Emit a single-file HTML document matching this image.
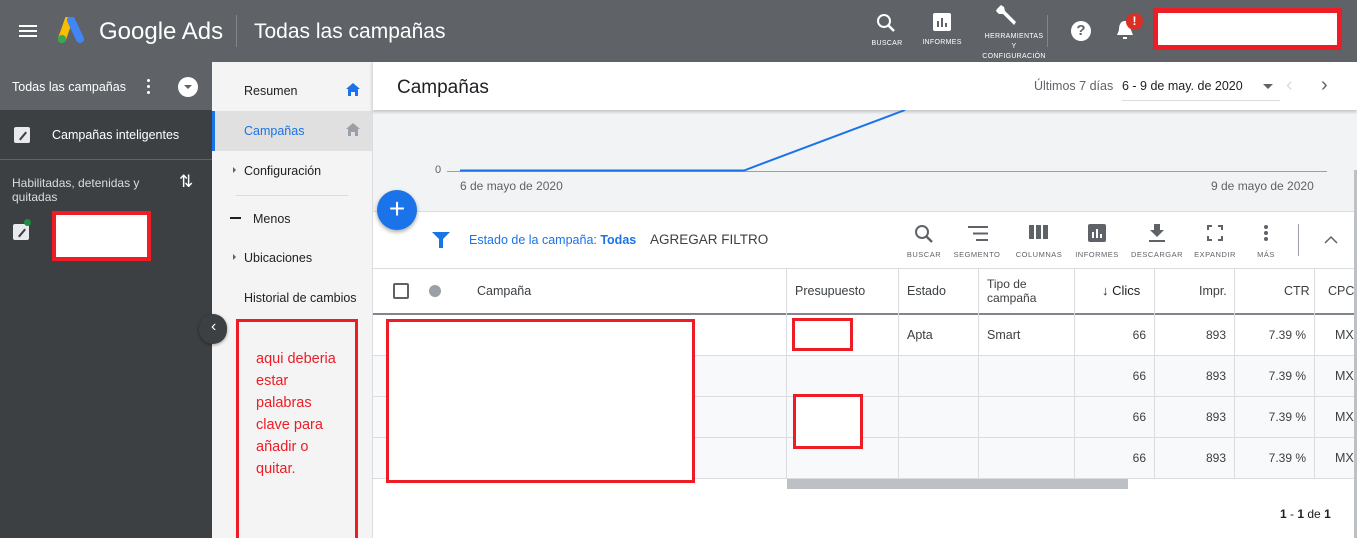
<!DOCTYPE html>
<html><head><meta charset="utf-8"><style>
*{box-sizing:border-box;margin:0;padding:0}
html,body{width:1357px;height:538px;overflow:hidden}
body{position:relative;font-family:"Liberation Sans",Arial,sans-serif;background:#fff;color:#3c4043}
.a{position:absolute}
.t{position:absolute;white-space:nowrap}
.red{position:absolute;border:3px solid #ee1c25;background:#fff}
.ic{position:absolute;font-size:7px;color:#fff;text-align:center;letter-spacing:.3px}
.tb{position:absolute;font-size:7.5px;color:#5f6368;text-align:center;letter-spacing:.5px;top:250px}
.vl{position:absolute;width:1px;background:#dadce0}
.hl{position:absolute;height:1px;background:#dadce0;left:372px;width:982px}
.num{position:absolute;font-size:12px;color:#3c4043;text-align:right}
</style></head><body>
<!-- header -->
<div class="a" style="left:0;top:0;width:1357px;height:62px;background:#5f6368"></div>
<div class="a" style="left:19px;top:25px;width:18px;height:2px;background:#fff;box-shadow:0 5px 0 #fff,0 10px 0 #fff"></div>
<svg class="a" style="left:55px;top:17px" width="32" height="28" viewBox="0 0 32 28"><path d="M14 2 L7 22" stroke="#fbbc04" stroke-width="8" stroke-linecap="round"/><path d="M16 3 L25 22" stroke="#4285f4" stroke-width="8" stroke-linecap="round"/><circle cx="7" cy="22" r="4" fill="#34a853"/></svg>
<div class="t" style="left:99px;top:18px;font-size:24px;color:#fff">Google Ads</div>
<div class="a" style="left:236px;top:15px;width:1px;height:32px;background:#80868b"></div>
<div class="t" style="left:254px;top:20px;font-size:21px;color:#fff">Todas las campañas</div>
<svg class="a" style="left:876px;top:13px" width="20" height="20" viewBox="0 0 20 20"><circle cx="8" cy="8" r="6" stroke="#fff" stroke-width="2" fill="none"/><path d="M12.5 12.5 L18 18" stroke="#fff" stroke-width="2.5"/></svg>
<div class="ic" style="left:866px;top:40px;width:42px">BUSCAR</div>
<svg class="a" style="left:933px;top:13px" width="18" height="18"><rect width="18" height="18" rx="2" fill="#fff"/><rect x="4" y="8" width="2" height="6" fill="#5f6368"/><rect x="8" y="5" width="2" height="9" fill="#5f6368"/><rect x="12" y="10" width="2" height="4" fill="#5f6368"/></svg>
<div class="ic" style="left:918px;top:39px;width:48px">INFORMES</div>
<svg class="a" style="left:995px;top:5px" width="24" height="22" viewBox="0 0 24 22"><path d="M2 4 L6 0 L9 2 L10 6 L21 17 L19 20 L8 9 L4 9 L1 6 Z" fill="#fff"/></svg>
<div class="ic" style="left:978px;top:32px;width:72px;line-height:10px">HERRAMIENTAS<br>Y<br>CONFIGURACIÓN</div>
<div class="a" style="left:1047px;top:15px;width:1px;height:32px;background:#80868b"></div>
<div class="a" style="left:1071px;top:21px;width:20px;height:20px;border-radius:50%;background:#fff;color:#5f6368;font-weight:bold;font-size:15px;text-align:center;line-height:20px">?</div>
<svg class="a" style="left:1115px;top:19px" width="20" height="22"><path d="M10 2 C5 2 4 7 4 11 L2 16 L18 16 L16 11 C16 7 15 2 10 2Z M8 18 h4 v2 h-4z" fill="#fff"/></svg>
<div class="a" style="left:1126px;top:13px;width:17px;height:17px;border-radius:50%;background:#d93025;color:#fff;font-size:12px;font-weight:bold;text-align:center;line-height:17px">!</div>
<div class="red" style="left:1153px;top:8px;width:189px;height:42px;border-width:5px"></div>

<!-- left sidebar -->
<div class="a" style="left:0;top:62px;width:212px;height:476px;background:#3c4043"></div>
<div class="a" style="left:0;top:62px;width:212px;height:48px;background:#5f6368"></div>
<div class="t" style="left:12px;top:80px;font-size:12.5px;color:#fff">Todas las campañas</div>
<div class="a" style="left:147px;top:79px;width:3px;height:3px;background:#fff;border-radius:50%;box-shadow:0 6px 0 #fff,0 12px 0 #fff"></div>
<div class="a" style="left:178px;top:77px;width:20px;height:20px;border-radius:50%;background:#fff"></div>
<div class="a" style="left:184px;top:85px;border-left:4px solid transparent;border-right:4px solid transparent;border-top:4px solid #5f6368"></div>
<div class="a" style="left:14px;top:127px;width:16px;height:16px;background:#e8eaed;border-radius:2px"></div>
<div class="a" style="left:18px;top:135px;width:10px;height:2px;background:#3c4043;transform:rotate(-50deg)"></div>
<div class="t" style="left:52px;top:128px;font-size:12.5px;color:#fff">Campañas inteligentes</div>
<div class="a" style="left:0;top:159px;width:212px;height:1px;background:#5f6368"></div>
<div class="t" style="left:12px;top:176px;font-size:12px;color:#dadce0;line-height:14px;white-space:normal;width:150px">Habilitadas, detenidas y quitadas</div>
<div class="t" style="left:179px;top:172px;font-size:17px;color:#fff">⇅</div>
<div class="a" style="left:13px;top:224px;width:16px;height:16px;background:#e8eaed;border-radius:2px"></div>
<div class="a" style="left:17px;top:232px;width:10px;height:2px;background:#3c4043;transform:rotate(-50deg)"></div>
<div class="a" style="left:24px;top:219px;width:7px;height:7px;border-radius:50%;background:#1e8e3e"></div>
<div class="red" style="left:52px;top:211px;width:99px;height:50px;border-width:4px"></div>

<!-- middle nav -->
<div class="a" style="left:212px;top:62px;width:160px;height:476px;background:#f4f4f4"></div>
<div class="t" style="left:244px;top:84px;font-size:12.5px;color:#202124">Resumen</div>
<svg class="a" style="left:346px;top:83px" width="14" height="13"><path d="M7 0 L14 6 L12 6 L12 13 L9 13 L9 9 L5 9 L5 13 L2 13 L2 6 L0 6Z" fill="#1a73e8"/></svg>
<div class="a" style="left:212px;top:111px;width:160px;height:40px;background:#e0e0e0;border-left:3px solid #1a73e8"></div>
<div class="t" style="left:244px;top:124px;font-size:12.5px;color:#1a73e8">Campañas</div>
<svg class="a" style="left:346px;top:123px" width="14" height="13"><path d="M7 0 L14 6 L12 6 L12 13 L9 13 L9 9 L5 9 L5 13 L2 13 L2 6 L0 6Z" fill="#9aa0a6"/></svg>
<div class="a" style="left:233px;top:167px;border-top:3px solid transparent;border-bottom:3px solid transparent;border-left:3px solid #5f6368"></div>
<div class="t" style="left:244px;top:164px;font-size:12.5px;color:#202124">Configuración</div>
<div class="a" style="left:236px;top:195px;width:112px;height:1px;background:#dadce0"></div>
<div class="a" style="left:230px;top:217px;width:11px;height:2px;background:#202124"></div>
<div class="t" style="left:253px;top:212px;font-size:12.5px;color:#202124">Menos</div>
<div class="a" style="left:233px;top:254px;border-top:3px solid transparent;border-bottom:3px solid transparent;border-left:3px solid #5f6368"></div>
<div class="t" style="left:244px;top:251px;font-size:12.5px;color:#202124">Ubicaciones</div>
<div class="t" style="left:244px;top:291px;font-size:12.5px;color:#202124">Historial de cambios</div>
<div class="red" style="left:236px;top:319px;width:122px;height:225px;background:#f4f4f4"></div>
<div class="t" style="left:256px;top:348px;font-size:14.5px;color:#ee1c25;line-height:22px">aqui deberia<br>estar<br>palabras<br>clave para<br>añadir o<br>quitar.</div>
<div class="a" style="left:199px;top:314px;width:28px;height:30px;border-radius:15px;background:#3c4043;box-shadow:0 1px 3px rgba(0,0,0,.4)"></div>
<div class="t" style="left:211px;top:318px;font-size:16px;color:#fff">‹</div>

<!-- main -->
<div class="a" style="left:372px;top:110px;width:985px;height:102px;background:#f1f3f4"></div>
<div class="a" style="left:372px;top:62px;width:985px;height:48px;background:#fff;box-shadow:0 2px 3px rgba(0,0,0,.2)"></div>
<div class="t" style="left:397px;top:77px;font-size:19px;color:#202124">Campañas</div>
<div class="t" style="left:1034px;top:79px;font-size:12.5px;color:#5f6368">Últimos 7 días</div>
<div class="t" style="left:1122px;top:79px;font-size:12.5px;color:#202124">6 - 9 de may. de 2020</div>
<div class="a" style="left:1122px;top:100px;width:158px;height:1px;background:#dadce0"></div>
<div class="a" style="left:1263px;top:84px;border-left:5px solid transparent;border-right:5px solid transparent;border-top:5px solid #5f6368"></div>
<div class="t" style="left:1286px;top:74px;font-size:20px;color:#dadce0">‹</div>
<div class="t" style="left:1321px;top:74px;font-size:20px;color:#5f6368">›</div>
<div class="t" style="left:435px;top:164px;font-size:11px;color:#5f6368">0</div>
<div class="a" style="left:447px;top:171px;width:880px;height:1px;background:#9aa0a6"></div>
<svg class="a" style="left:372px;top:110px" width="985" height="102"><path d="M88 60.5 L372 60.5 L533 0" stroke="#1a73e8" stroke-width="2" fill="none"/></svg>
<div class="t" style="left:460px;top:179px;font-size:12px;color:#5f6368">6 de mayo de 2020</div>
<div class="t" style="left:1211px;top:179px;font-size:12px;color:#5f6368">9 de mayo de 2020</div>
<div class="a" style="left:372px;top:211px;width:982px;height:1px;background:#dadce0"></div>
<div class="a" style="left:377px;top:190px;width:40px;height:40px;border-radius:50%;background:#1a73e8;box-shadow:0 2px 4px rgba(0,0,0,.35);color:#fff;font-size:28px;text-align:center;line-height:38px">+</div>
<svg class="a" style="left:432px;top:232px" width="18" height="16"><path d="M0 0 H18 L11 7 V16 H7 V7Z" fill="#1a73e8"/></svg>
<div class="t" style="left:469px;top:233px;font-size:12.5px;color:#1a73e8">Estado de la campaña: <b>Todas</b></div>
<div class="t" style="left:650px;top:232px;font-size:13.5px;color:#3c4043">AGREGAR FILTRO</div>
<svg class="a" style="left:914px;top:224px" width="20" height="20"><circle cx="8" cy="8" r="6" stroke="#5f6368" stroke-width="2" fill="none"/><path d="M12.5 12.5 L18 18" stroke="#5f6368" stroke-width="2.5"/></svg>
<div class="tb" style="left:904px;width:40px">BUSCAR</div>
<svg class="a" style="left:968px;top:226px" width="20" height="16"><path d="M0 1h20M5 7.5h15M8 14h12" stroke="#5f6368" stroke-width="2"/></svg>
<div class="tb" style="left:951px;width:52px">SEGMENTO</div>
<svg class="a" style="left:1029px;top:225px" width="19" height="14"><rect x="0" width="5" height="14" fill="#5f6368"/><rect x="7" width="5" height="14" fill="#5f6368"/><rect x="14" width="5" height="14" fill="#5f6368"/></svg>
<div class="tb" style="left:1012px;width:54px">COLUMNAS</div>
<svg class="a" style="left:1088px;top:224px" width="18" height="18"><rect width="18" height="18" rx="2" fill="#5f6368"/><rect x="4" y="8" width="2" height="6" fill="#fff"/><rect x="8" y="5" width="2" height="9" fill="#fff"/><rect x="12" y="10" width="2" height="4" fill="#fff"/></svg>
<div class="tb" style="left:1072px;width:50px">INFORMES</div>
<svg class="a" style="left:1148px;top:224px" width="18" height="18"><path d="M6 0h6v6h4l-7 7-7-7h4z M1 16h16v2H1z" fill="#5f6368"/></svg>
<div class="tb" style="left:1130px;width:54px">DESCARGAR</div>
<svg class="a" style="left:1207px;top:225px" width="16" height="16"><path d="M1 5V1h4M11 1h4v4M15 11v4h-4M5 15H1v-4" stroke="#5f6368" stroke-width="2" fill="none"/></svg>
<div class="tb" style="left:1193px;width:44px">EXPANDIR</div>
<div class="a" style="left:1264px;top:225px;width:4px;height:4px;border-radius:50%;background:#5f6368;box-shadow:0 6px 0 #5f6368,0 12px 0 #5f6368"></div>
<div class="tb" style="left:1252px;width:28px">MÁS</div>
<div class="a" style="left:1298px;top:224px;width:1px;height:32px;background:#9aa0a6"></div>
<svg class="a" style="left:1324px;top:235px" width="14" height="9"><path d="M1 8 L7 2 L13 8" stroke="#5f6368" stroke-width="1.5" fill="none"/></svg>
<div class="a" style="left:372px;top:268px;width:982px;height:1px;background:#dadce0"></div>
<!-- table -->
<div class="a" style="left:372px;top:355px;width:982px;height:123px;background:#f8f9fa"></div>
<div class="a" style="left:372px;top:313px;width:982px;height:2px;background:#80868b"></div>
<div class="hl" style="top:355px"></div><div class="hl" style="top:396px"></div><div class="hl" style="top:437px"></div><div class="hl" style="top:478px"></div>
<div class="vl" style="left:786px;top:268px;height:210px"></div>
<div class="vl" style="left:898px;top:268px;height:210px"></div>
<div class="vl" style="left:978px;top:268px;height:210px"></div>
<div class="vl" style="left:1074px;top:268px;height:210px"></div>
<div class="vl" style="left:1154px;top:268px;height:210px"></div>
<div class="vl" style="left:1234px;top:268px;height:210px"></div>
<div class="vl" style="left:1314px;top:268px;height:210px"></div>
<div class="a" style="left:393px;top:283px;width:16px;height:16px;border:2px solid #5f6368;border-radius:2px"></div>
<div class="a" style="left:429px;top:285px;width:12px;height:12px;border-radius:50%;background:#9aa0a6"></div>
<div class="t" style="left:477px;top:284px;font-size:12.5px;color:#3c4043">Campaña</div>
<div class="t" style="left:795px;top:284px;font-size:12.5px;color:#3c4043">Presupuesto</div>
<div class="t" style="left:907px;top:284px;font-size:12.5px;color:#3c4043">Estado</div>
<div class="t" style="left:987px;top:277px;font-size:12px;color:#3c4043;line-height:14px">Tipo de<br>campaña</div>
<div class="t" style="left:1102px;top:283px;font-size:13px;color:#202124">↓ Clics</div>
<div class="t" style="left:1199px;top:284px;font-size:12.5px;color:#3c4043">Impr.</div>
<div class="t" style="left:1284px;top:284px;font-size:12.5px;color:#3c4043">CTR</div>
<div class="t" style="left:1328px;top:284px;font-size:12.5px;color:#3c4043">CPC</div>
<div class="t" style="left:907px;top:328px;font-size:12.5px">Apta</div>
<div class="t" style="left:987px;top:328px;font-size:12.5px">Smart</div>
<div class="num" style="left:1094px;width:52px;top:328px">66</div><div class="num" style="left:1174px;width:52px;top:328px">893</div><div class="num" style="left:1244px;width:62px;top:328px">7.39 %</div><div class="t" style="left:1335px;top:328px;font-size:12.5px">MXI</div>
<div class="num" style="left:1094px;width:52px;top:369px">66</div><div class="num" style="left:1174px;width:52px;top:369px">893</div><div class="num" style="left:1244px;width:62px;top:369px">7.39 %</div><div class="t" style="left:1335px;top:369px;font-size:12.5px">MXI</div>
<div class="num" style="left:1094px;width:52px;top:410px">66</div><div class="num" style="left:1174px;width:52px;top:410px">893</div><div class="num" style="left:1244px;width:62px;top:410px">7.39 %</div><div class="t" style="left:1335px;top:410px;font-size:12.5px">MXI</div>
<div class="num" style="left:1094px;width:52px;top:451px">66</div><div class="num" style="left:1174px;width:52px;top:451px">893</div><div class="num" style="left:1244px;width:62px;top:451px">7.39 %</div><div class="t" style="left:1335px;top:451px;font-size:12.5px">MXI</div>
<div class="a" style="left:787px;top:479px;width:341px;height:10px;background:#bdc1c6"></div>
<div class="t" style="left:1280px;top:507px;font-size:12px;color:#202124"><b>1</b> - <b>1</b> de <b>1</b></div>
<div class="a" style="left:1354px;top:170px;width:3px;height:368px;background:#bdc1c6"></div>
<div class="a" style="left:372px;top:62px;width:1px;height:476px;background:#dadce0"></div>
<div class="red" style="left:386px;top:319px;width:309px;height:164px"></div>
<div class="red" style="left:792px;top:318px;width:61px;height:33px"></div>
<div class="red" style="left:793px;top:394px;width:70px;height:55px"></div>
</body></html>
